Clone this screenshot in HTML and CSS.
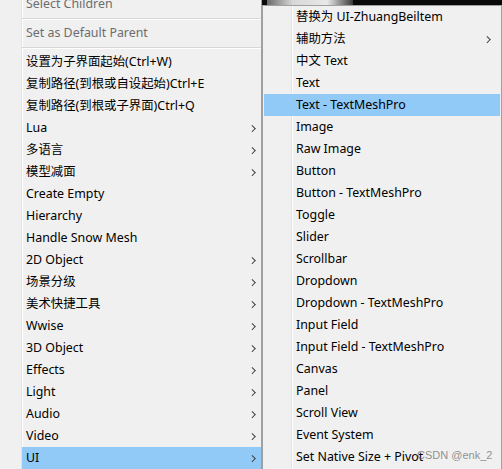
FILE: index.html
```html
<!DOCTYPE html>
<html>
<head>
<meta charset="utf-8">
<link rel="stylesheet" href="styles.css">
</head>
<body>
<div class="screen">
  <div class="menu main">
    <div class="item disabled">Select Children</div>
    <div class="sep"></div>
    <div class="item disabled">Set as Default Parent</div>
    <div class="sep"></div>
    <div class="item">设置为子界面起始(Ctrl+W)</div>
    <div class="item">复制路径(到根或自设起始)Ctrl+E</div>
    <div class="item">复制路径(到根或子界面)Ctrl+Q</div>
    <div class="item sub">Lua</div>
    <div class="item sub">多语言</div>
    <div class="item sub">模型减面</div>
    <div class="item">Create Empty</div>
    <div class="item">Hierarchy</div>
    <div class="item">Handle Snow Mesh</div>
    <div class="item sub">2D Object</div>
    <div class="item sub">场景分级</div>
    <div class="item sub">美术快捷工具</div>
    <div class="item sub">Wwise</div>
    <div class="item sub">3D Object</div>
    <div class="item sub">Effects</div>
    <div class="item sub">Light</div>
    <div class="item sub">Audio</div>
    <div class="item sub">Video</div>
    <div class="item sub active">UI</div>
  </div>
  <div class="right">
    <div class="backdrop"><span class="glow"></span></div>
    <div class="menu submenu">
      <div class="item">替换为 UI-ZhuangBeiltem</div>
      <div class="item sub">辅助方法</div>
      <div class="item">中文 Text</div>
      <div class="item">Text</div>
      <div class="item active">Text - TextMeshPro</div>
      <div class="item">Image</div>
      <div class="item">Raw Image</div>
      <div class="item">Button</div>
      <div class="item">Button - TextMeshPro</div>
      <div class="item">Toggle</div>
      <div class="item">Slider</div>
      <div class="item">Scrollbar</div>
      <div class="item">Dropdown</div>
      <div class="item">Dropdown - TextMeshPro</div>
      <div class="item">Input Field</div>
      <div class="item">Input Field - TextMeshPro</div>
      <div class="item">Canvas</div>
      <div class="item">Panel</div>
      <div class="item">Scroll View</div>
      <div class="item">Event System</div>
      <div class="item">Set Native Size + Pivot</div>
    </div>
  </div>
  <div class="watermark">CSDN @enk_2</div>
</div>
</body>
</html>
```
FILE: styles.css
```css
html, body {
  margin: 0;
  padding: 0;
  width: 502px;
  height: 469px;
  overflow: hidden;
  background: #f0f0f0;
}
.screen {
  position: relative;
  display: flex;
  width: 502px;
  height: 469px;
  overflow: hidden;
  font-family: "Noto Sans", "Noto Sans CJK SC", sans-serif;
  font-size: 12.4px;
  color: #000;
}
.menu {
  box-sizing: border-box;
  background: #f0f0f0;
  display: flex;
  flex-direction: column;
}
.main {
  width: 262px;
  flex: none;
  margin-top: -7px;
  border-right: 1px solid #a0a0a0;
  background: linear-gradient(to right, #f0f0f0 21px, #e2e3e3 21px, #e2e3e3 22px, #ffffff 22px, #ffffff 23px, #f0f0f0 23px);
}
.right {
  flex: 1;
  display: flex;
  flex-direction: column;
}
.backdrop {
  height: 5px;
  flex: none;
  background: #0a0a0a;
  display: flex;
  padding-left: 5px;
}
.glow {
  width: 86px;
  background: linear-gradient(to right, #6a6a6a, #d8d8d8 30%, #e8e8e8 70%, #3a3a3a);
}
.submenu {
  width: 240px;
  flex: 1;
  border: 1px solid #a0a0a0;
  border-bottom: none;
  background: linear-gradient(to right, #f0f0f0 28px, #e2e3e3 28px, #e2e3e3 29px, #ffffff 29px, #ffffff 30px, #f0f0f0 30px);
}
.item {
  position: relative;
  height: 22px;
  line-height: 22px;
  flex: none;
  white-space: nowrap;
}
.main .item {
  padding-left: 26px;
}
.submenu .item {
  padding-left: 32px;
  margin: 0 1px;
}
.item.disabled {
  color: #6d6d6d;
}
.main .item.active {
  background: #91c9f7;
  margin-left: 22px;
  padding-left: 4px;
}
.submenu .item.active {
  background: #91c9f7;
}
.item.sub::after {
  content: "";
  position: absolute;
  top: 8.5px;
  width: 3.5px;
  height: 3.5px;
  border-right: 1.5px solid #404040;
  border-top: 1.5px solid #404040;
  transform: rotate(45deg);
}
.main .item.sub::after {
  right: 7px;
}
.submenu .item.sub::after {
  right: 11px;
}
.sep {
  height: 7px;
  flex: none;
  box-sizing: border-box;
  margin-left: 22px;
  padding-top: 3px;
}
.sep::before {
  content: "";
  display: block;
  height: 1px;
  background: #d7d7d7;
  border-bottom: 1px solid #ffffff;
}
.watermark {
  position: absolute;
  left: 417px;
  top: 449px;
  font-family: "Liberation Sans", sans-serif;
  font-size: 11px;
  color: rgba(110, 110, 110, 0.75);
}
```
